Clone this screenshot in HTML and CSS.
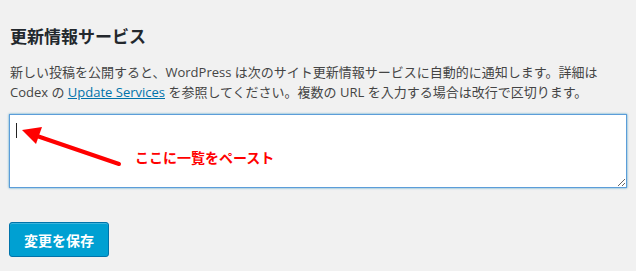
FILE: index.html
```html
<!DOCTYPE html>
<html lang="ja">
<head>
<meta charset="utf-8">
<title>更新情報サービス</title>
<link rel="stylesheet" href="styles.css">
</head>
<body>
<div class="wrap">
  <h2 class="title">更新情報サービス</h2>
  <p class="desc">新しい投稿を公開すると、WordPress は次のサイト更新情報サービスに自動的に通知します。詳細は<br>Codex の <a href="#">Update Services</a> を参照してください。複数の URL を入力する場合は改行で区切ります。</p>
  <div class="field">
    <textarea class="ping" rows="3"></textarea>
    <span class="caret"></span>
    <svg class="arrow" width="120" height="50" viewBox="0 0 120 50">
      <line x1="110" y1="45" x2="28" y2="17" stroke="#f00" stroke-width="4" stroke-linecap="round"/>
      <polygon points="13,11 33,8 27,25" fill="#f00"/>
    </svg>
    <span class="note">ここに一覧をペースト</span>
  </div>
  <div class="actions">
    <button class="primary" type="button">変更を保存</button>
  </div>
</div>
</body>
</html>
```
FILE: styles.css
```css
html, body {
  margin: 0;
  padding: 0;
  background: #f1f1f1;
}
body {
  font-family: "Open Sans", "Noto Sans CJK JP", sans-serif;
  color: #444;
}
.wrap {
  padding: 24px 10px 0 9px;
}
.title {
  margin: 0 0 14px 1px;
  font-size: 17px;
  line-height: 24px;
  font-weight: bold;
  color: #23282d;
  font-family: "Noto Sans CJK JP", sans-serif;
}
.desc {
  margin: 0 0 12px 1px;
  font-size: 13px;
  line-height: 20px;
  white-space: nowrap;
}
.desc a {
  color: #0073aa;
  text-decoration: underline;
}
.field {
  position: relative;
  width: 618px;
}
.ping {
  display: block;
  box-sizing: border-box;
  width: 618px;
  height: 74px;
  margin: 0;
  border: 1px solid #5b9dd9;
  box-shadow: 0 0 2px rgba(30, 140, 190, 0.8);
  background: #fff;
  outline: none;
  font-size: 14px;
}
.caret {
  position: absolute;
  left: 7px;
  top: 9px;
  width: 1px;
  height: 15px;
  background: #222;
}
.arrow {
  position: absolute;
  left: 0;
  top: 5px;
}
.note {
  position: absolute;
  left: 126px;
  top: 33px;
  font-family: "Noto Sans CJK JP", sans-serif;
  font-size: 14px;
  line-height: 20px;
  font-weight: bold;
  color: #f00;
}
.actions {
  padding-top: 34px;
}
.primary {
  box-sizing: border-box;
  width: 100px;
  height: 35px;
  background: #00a0d2;
  border: 1px solid #0073aa;
  border-radius: 3px;
  color: #fff;
  font-family: "Noto Sans CJK JP", sans-serif;
  font-size: 14px;
  font-weight: bold;
  padding: 0;
  box-shadow: inset 0 1px 0 rgba(120, 200, 230, 0.5);
}
```
